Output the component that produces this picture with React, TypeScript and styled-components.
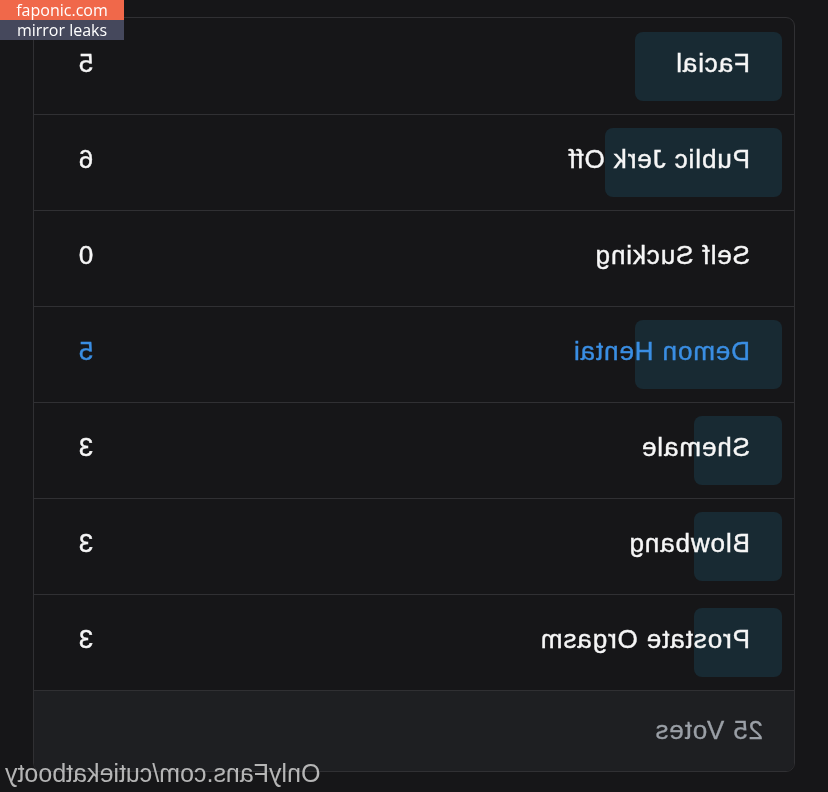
import React from "react";
import styled, { createGlobalStyle } from "styled-components";

const options = [
  { label: "Facial", votes: 5 },
  { label: "Public Jerk Off", votes: 6 },
  { label: "Self Sucking", votes: 0 },
  { label: "Demon Hentai", votes: 5, chosen: true },
  { label: "Shemale", votes: 3 },
  { label: "Blowbang", votes: 3 },
  { label: "Prostate Orgasm", votes: 3 },
];

const total = options.reduce((sum, o) => sum + o.votes, 0);

function App() {
  return (
    <React.Fragment>
      <GlobalStyle />
      <Page>
        <Mirror>
          <Card>
            {options.map((option) => (
              <Row key={option.label}>
                <Track>
                  {option.votes > 0 && (
                    <Fill style={{ width: `${(option.votes / total) * 100}%` }} />
                  )}
                  <Label $chosen={option.chosen}>{option.label}</Label>
                  <Count $chosen={option.chosen}>{option.votes}</Count>
                </Track>
              </Row>
            ))}
            <Footer>{total} Votes</Footer>
          </Card>
          <Watermark>OnlyFans.com/cutiekatbooty</Watermark>
        </Mirror>
        <Badge>
          <BadgeTop>faponic.com</BadgeTop>
          <BadgeBottom>mirror leaks</BadgeBottom>
        </Badge>
      </Page>
    </React.Fragment>
  );
}

export default App;

const GlobalStyle = createGlobalStyle`
  html, body {
    margin: 0;
    padding: 0;
    background: #161618;
  }
  body {
    font-family: "Liberation Sans", Arial, sans-serif;
  }
`;

const Page = styled.div`
  position: relative;
  width: 828px;
  height: 792px;
  overflow: hidden;
  background: #161618;
`;

// the whole shot is flipped left to right
const Mirror = styled.div`
  position: relative;
  width: 828px;
  height: 792px;
  padding-top: 17px;
  box-sizing: border-box;
  transform: scaleX(-1);
`;

const Card = styled.div`
  margin-left: 33px;
  width: 762px;
  box-sizing: border-box;
  border: 1px solid #303033;
  border-radius: 9px;
  overflow: hidden;
  background: #161618;
`;

const Row = styled.div`
  height: 95px;
  padding: 0 12px;
  display: flex;
  align-items: center;
  border-bottom: 1px solid #303033;

  &:first-child {
    height: 96px;
  }
`;

const Track = styled.div`
  position: relative;
  flex: 1;
  height: 69px;
  box-sizing: border-box;
  display: flex;
  align-items: center;
  justify-content: space-between;
  padding: 0 32px 6px;
`;

const Fill = styled.div`
  position: absolute;
  left: 0;
  top: 0;
  bottom: 0;
  border-radius: 8px;
  background: #182a33;
`;

const Label = styled.span<{ $chosen?: boolean }>`
  position: relative;
  font-size: 26px;
  letter-spacing: 0.9px;
  color: ${(p) => (p.$chosen ? "#3a8ee3" : "#f6f6f6")};
  -webkit-text-stroke: 0.4px currentColor;
`;

const Count = styled(Label)``;

const Footer = styled.div`
  height: 80px;
  display: flex;
  align-items: center;
  padding: 0 0 2px 31px;
  box-sizing: border-box;
  background: #1e1f22;
  font-size: 26px;
  letter-spacing: 0.9px;
  color: #9a9fa6;
  -webkit-text-stroke: 0.3px currentColor;
`;

const Watermark = styled.div`
  position: absolute;
  right: 5px;
  top: 759px;
  font-size: 25px;
  color: rgba(220, 220, 220, 0.8);
  white-space: nowrap;
`;

const Badge = styled.div`
  position: absolute;
  left: 0;
  top: 0;
  width: 124px;
  display: flex;
  flex-direction: column;
  font-family: "Open Sans", "Liberation Sans", sans-serif;
  font-size: 16px;
  color: #ffffff;
  text-align: center;
`;

const BadgeTop = styled.div`
  height: 20px;
  line-height: 20px;
  background: #f0684a;
`;

const BadgeBottom = styled.div`
  height: 20px;
  line-height: 20px;
  background: #45485c;
`;
